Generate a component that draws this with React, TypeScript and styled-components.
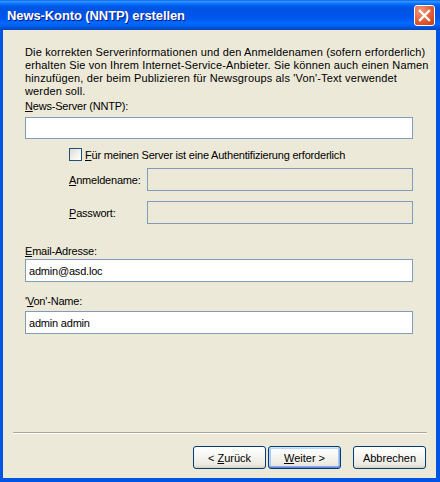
import React from "react";
import styled, { createGlobalStyle } from "styled-components";

const Global = createGlobalStyle`
  html, body { margin: 0; padding: 0; background: #ece9d8; }
  body { font-family: "Liberation Sans", Arial, sans-serif; font-size: 11px; color: #000; }
`;

const Window = styled.div`
  width: 440px;
  height: 482px;
  display: flex;
  flex-direction: column;
  box-sizing: border-box;
  background: #0054e3;
`;

const TitleBar = styled.div`
  height: 30px;
  flex: none;
  display: flex;
  align-items: center;
  justify-content: space-between;
  padding: 0 5px 0 7px;
  box-sizing: border-box;
  background: linear-gradient(
    to bottom,
    #0058ee 0%, #3593ff 4%, #288eff 7%, #127dff 10%, #036ffc 14%,
    #0262ee 18%, #0057e5 24%, #0054e3 30%, #0055eb 56%, #005bf5 66%,
    #026afe 76%, #0062ef 86%, #0052d6 92%, #0046c0 100%
  );
`;

const Title = styled.span`
  color: #fff;
  font-family: "Liberation Sans", Arial, sans-serif;
  font-weight: bold;
  font-size: 13px;
  letter-spacing: -0.1px;
  text-shadow: 1px 1px 0 #0a1883;
  margin-top: 1px;
`;

const CloseButton = styled.div`
  width: 21px;
  height: 21px;
  box-sizing: border-box;
  border: 1px solid #fff;
  border-radius: 3px;
  margin-top: 1px;
  display: flex;
  align-items: center;
  justify-content: center;
  background: radial-gradient(circle at 30% 25%, #f39a7e 0%, #e7673f 45%, #d04a25 80%, #c0391b 100%);
`;

const Body = styled.div`
  flex: 1;
  display: flex;
  flex-direction: column;
  background: #ece9d8;
  margin: 0 4px 4px 3px;
  padding: 16px 23px 9px 22px;
`;

const Intro = styled.p`
  margin: 0;
  line-height: 13px;
  letter-spacing: 0.15px;
  white-space: nowrap;
`;

const Label = styled.label<{ $mt: number; $mb: number }>`
  display: block;
  line-height: 13px;
  margin-top: ${(p) => p.$mt}px;
  margin-bottom: ${(p) => p.$mb}px;
  letter-spacing: -0.2px;
`;

const Key = styled.span`
  text-decoration: underline;
`;

const TextBox = styled.input<{ $h?: number }>`
  display: block;
  box-sizing: border-box;
  width: 100%;
  height: ${(p) => p.$h ?? 23}px;
  margin: 0;
  border: 1px solid #7f9db9;
  background: #fff;
  padding: 0 3px;
  font-family: "Liberation Sans", Arial, sans-serif;
  font-size: 11px;
  letter-spacing: -0.2px;
  color: #000;
  outline: none;
  &:disabled {
    background: #ece9d8;
  }
`;

const CheckRow = styled.div`
  display: flex;
  align-items: center;
  gap: 3px;
  margin: 9px 0 0 44px;
  height: 13px;
  letter-spacing: -0.2px;
`;

const CheckBox = styled.span`
  width: 13px;
  height: 13px;
  box-sizing: border-box;
  border: 1px solid #1c5180;
  background: linear-gradient(135deg, #dcdcd7 0%, #f4f4f0 60%, #fff 100%);
`;

const AuthRow = styled.div<{ $mt: number }>`
  display: grid;
  grid-template-columns: 78px 1fr;
  align-items: center;
  margin: ${(p) => p.$mt}px 0 0 44px;
  letter-spacing: -0.2px;
`;

const Footer = styled.div`
  margin-top: auto;
  display: flex;
  flex-direction: column;
  margin-left: -12px;
  margin-right: -14px;
`;

const Separator = styled.div`
  height: 0;
  border-top: 1px solid #aca899;
  border-bottom: 1px solid #fff;
  margin: 0 0 12px 0;
`;

const ButtonRow = styled.div`
  display: flex;
  justify-content: flex-end;
  gap: 2px;
  padding-right: 1px;
`;

const Button = styled.button<{ $default?: boolean; $gap?: number }>`
  width: 73px;
  height: 23px;
  box-sizing: border-box;
  border: 1px solid #003c74;
  border-radius: 3px;
  padding: 0;
  margin-left: ${(p) => p.$gap ?? 0}px;
  font-family: "Liberation Sans", Arial, sans-serif;
  font-size: 11px;
  color: #000;
  background: linear-gradient(to bottom, #ffffff 0%, #f6f6f3 40%, #ece9e0 85%, #d6d0c5 100%);
  box-shadow: ${(p) =>
    p.$default
      ? "inset 0 1px 0 #cee7ff, inset 0 -1px 0 #6982ee, inset 1px 0 0 #bcd4f6, inset -1px 0 0 #89ade4, inset 0 2px 0 #bcd4f6, inset 0 -2px 0 #89ade4, inset 2px 0 0 #a9c7f5, inset -2px 0 0 #a9c7f5"
      : "none"};
`;

export default function App() {
  return (
    <>
      <Global />
      <Window>
        <TitleBar>
          <Title>News-Konto (NNTP) erstellen</Title>
          <CloseButton>
            <svg width="13" height="13" viewBox="0 0 13 13">
              <path d="M2 2 L11 11 M11 2 L2 11" stroke="#fff" strokeWidth="2.3" strokeLinecap="square" />
            </svg>
          </CloseButton>
        </TitleBar>
        <Body>
          <Intro>
            Die korrekten Serverinformationen und den Anmeldenamen (sofern erforderlich)
            <br />
            erhalten Sie von Ihrem Internet-Service-Anbieter. Sie können auch einen Namen
            <br />
            hinzufügen, der beim Publizieren für Newsgroups als 'Von'-Text verwendet
            <br />
            werden soll.
          </Intro>
          <Label $mt={2} $mb={4}>
            <Key>N</Key>ews-Server (NNTP):
          </Label>
          <TextBox $h={22} />
          <CheckRow>
            <CheckBox />
            <span>
              <Key>F</Key>ür meinen Server ist eine Authentifizierung erforderlich
            </span>
          </CheckRow>
          <AuthRow $mt={7}>
            <span>
              <Key>A</Key>nmeldename:
            </span>
            <TextBox disabled />
          </AuthRow>
          <AuthRow $mt={10}>
            <span>
              <Key>P</Key>asswort:
            </span>
            <TextBox disabled />
          </AuthRow>
          <Label $mt={21} $mb={1}>
            <Key>E</Key>mail-Adresse:
          </Label>
          <TextBox defaultValue="admin@asd.loc" />
          <Label $mt={13} $mb={3}>
            '<Key>V</Key>on'-Name:
          </Label>
          <TextBox defaultValue="admin admin" />
          <Footer>
            <Separator />
            <ButtonRow>
              <Button>
                &lt; <Key>Z</Key>urück
              </Button>
              <Button $default>
                <Key>W</Key>eiter &gt;
              </Button>
              <Button $gap={10}>Abbrechen</Button>
            </ButtonRow>
          </Footer>
        </Body>
      </Window>
    </>
  );
}
